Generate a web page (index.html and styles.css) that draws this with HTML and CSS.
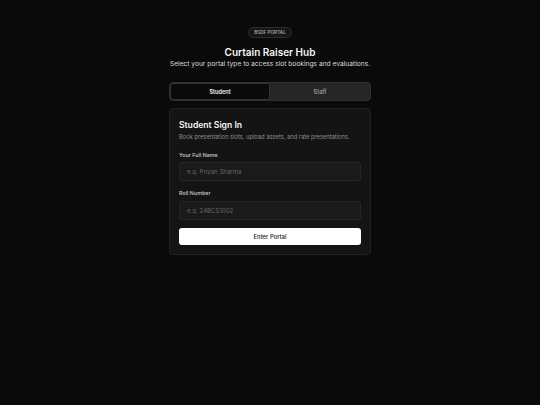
FILE: index.html
```html
<!DOCTYPE html>
<html>
<head>
<meta charset="utf-8">
<link rel="stylesheet" href="styles.css">
</head>
<body>
<main class="wrap">
  <div class="badge-row"><span class="badge">BSDF PORTAL</span></div>
  <h1 class="title">Curtain Raiser Hub</h1>
  <p class="subtitle">Select your portal type to access slot bookings and evaluations.</p>
  <div class="tabs">
    <button class="tab active">Student</button>
    <button class="tab">Staff</button>
  </div>
  <section class="card">
    <h2 class="card-title">Student Sign In</h2>
    <p class="card-desc">Book presentation slots, upload assets, and rate presentations.</p>
    <label class="label">Your Full Name</label>
    <input class="input" placeholder="e.g. Priyan Sharma">
    <label class="label label2">Roll Number</label>
    <input class="input" placeholder="e.g. 24BCS1002">
    <button class="submit">Enter Portal</button>
  </section>
</main>
</body>
</html>
```
FILE: styles.css
```css
html, body {
  margin: 0;
  padding: 0;
  background: #0a0a0a;
  height: 100%;
}
body {
  font-family: Inter, "Noto Sans", sans-serif;
  color: #f2f2f2;
}
.wrap {
  width: 202px;
  margin: 0 auto;
  padding-top: 27px;
  display: flex;
  flex-direction: column;
}
.badge-row {
  display: flex;
  justify-content: center;
}
.badge {
  height: 11px;
  width: 44px;
  box-sizing: border-box;
  border: 1px solid #2e2e2e;
  background: #161616;
  border-radius: 6px;
  font-size: 4.5px;
  font-weight: 600;
  color: #a8a8a8;
  display: flex;
  align-items: center;
  justify-content: center;
  letter-spacing: 0.1px;
}
.title {
  margin: 7px 0 0;
  font-size: 10px;
  line-height: 14px;
  font-weight: 600;
  text-align: center;
  color: #f5f5f5;
}
.subtitle {
  margin: 0;
  font-size: 6.65px;
  line-height: 10px;
  text-align: center;
  color: #dadada;
  white-space: nowrap;
}
.tabs {
  margin-top: 13px;
  height: 19px;
  box-sizing: border-box;
  background: #262626;
  border: 1px solid #303030;
  border-radius: 4px;
  display: flex;
}
.tab {
  flex: 1;
  border: 1px solid transparent;
  background: transparent;
  border-radius: 3px;
  font-family: inherit;
  font-size: 5.6px;
  font-weight: 600;
  color: #9a9a9a;
  padding: 0;
}
.tab.active {
  background: #0a0a0a;
  border-color: #333;
  color: #f5f5f5;
}
.card {
  margin-top: 7px;
  background: #141414;
  border: 1px solid #222;
  border-radius: 4px;
  padding: 10px 9px 9px;
  display: flex;
  flex-direction: column;
}
.card-title {
  margin: 0;
  font-size: 8.6px;
  line-height: 12px;
  font-weight: 600;
  color: #f5f5f5;
}
.card-desc {
  margin: 1px 0 0;
  font-size: 5.75px;
  line-height: 9px;
  color: #8e8e8e;
  white-space: nowrap;
}
.label {
  margin-top: 10px;
  font-size: 5.4px;
  line-height: 8px;
  font-weight: 500;
  color: #cfcfcf;
}
.label2 {
  margin-top: 8px;
}
.input {
  margin-top: 3px;
  height: 19px;
  box-sizing: border-box;
  background: #1a1a1a;
  border: 1px solid #262626;
  border-radius: 3px;
  padding: 0 7px;
  font-family: inherit;
  font-size: 6.1px;
  color: #ddd;
  outline: none;
}
.input + .label2 + .input {
  margin-top: 4px;
}
.input::placeholder {
  color: #676767;
}
.submit {
  margin-top: 8px;
  height: 17px;
  background: #ffffff;
  color: #111;
  border: none;
  border-radius: 3px;
  font-family: inherit;
  font-size: 5.9px;
  font-weight: 500;
  padding: 0;
}
```
